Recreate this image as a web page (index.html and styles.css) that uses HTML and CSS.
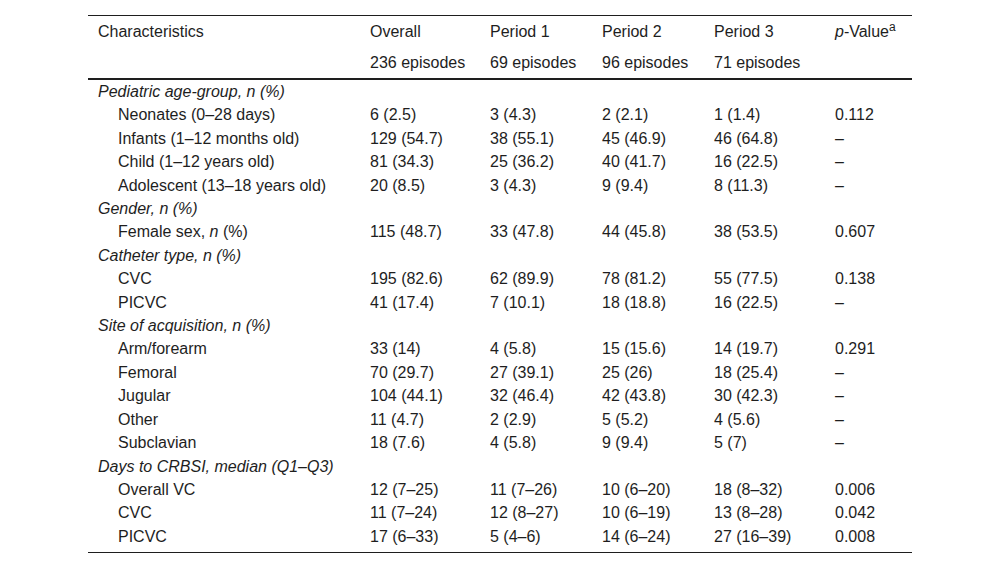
FILE: index.html
```html
<!DOCTYPE html>
<html lang="en">
<head>
<meta charset="utf-8">
<title>Table</title>
<link rel="stylesheet" href="styles.css">
</head>
<body>
<table class="tbl">
  <colgroup>
    <col class="c1"><col class="c2"><col class="c3"><col class="c4"><col class="c5"><col class="c6">
  </colgroup>
  <thead>
    <tr class="h1">
      <th>Characteristics</th><th>Overall</th><th>Period 1</th><th>Period 2</th><th>Period 3</th><th><i>p</i>-Value<sup>a</sup></th>
    </tr>
    <tr class="h2">
      <th></th><th>236 episodes</th><th>69 episodes</th><th>96 episodes</th><th>71 episodes</th><th></th>
    </tr>
  </thead>
  <tbody>
    <tr><td class="grp" colspan="6">Pediatric age-group, n (%)</td></tr>
    <tr><td class="sub">Neonates (0–28 days)</td><td>6 (2.5)</td><td>3 (4.3)</td><td>2 (2.1)</td><td>1 (1.4)</td><td>0.112</td></tr>
    <tr><td class="sub">Infants (1–12 months old)</td><td>129 (54.7)</td><td>38 (55.1)</td><td>45 (46.9)</td><td>46 (64.8)</td><td>–</td></tr>
    <tr><td class="sub">Child (1–12 years old)</td><td>81 (34.3)</td><td>25 (36.2)</td><td>40 (41.7)</td><td>16 (22.5)</td><td>–</td></tr>
    <tr><td class="sub">Adolescent (13–18 years old)</td><td>20 (8.5)</td><td>3 (4.3)</td><td>9 (9.4)</td><td>8 (11.3)</td><td>–</td></tr>
    <tr><td class="grp" colspan="6">Gender, n (%)</td></tr>
    <tr><td class="sub">Female sex, <i>n</i> (%)</td><td>115 (48.7)</td><td>33 (47.8)</td><td>44 (45.8)</td><td>38 (53.5)</td><td>0.607</td></tr>
    <tr><td class="grp" colspan="6">Catheter type, n (%)</td></tr>
    <tr><td class="sub">CVC</td><td>195 (82.6)</td><td>62 (89.9)</td><td>78 (81.2)</td><td>55 (77.5)</td><td>0.138</td></tr>
    <tr><td class="sub">PICVC</td><td>41 (17.4)</td><td>7 (10.1)</td><td>18 (18.8)</td><td>16 (22.5)</td><td>–</td></tr>
    <tr><td class="grp" colspan="6">Site of acquisition, n (%)</td></tr>
    <tr><td class="sub">Arm/forearm</td><td>33 (14)</td><td>4 (5.8)</td><td>15 (15.6)</td><td>14 (19.7)</td><td>0.291</td></tr>
    <tr><td class="sub">Femoral</td><td>70 (29.7)</td><td>27 (39.1)</td><td>25 (26)</td><td>18 (25.4)</td><td>–</td></tr>
    <tr><td class="sub">Jugular</td><td>104 (44.1)</td><td>32 (46.4)</td><td>42 (43.8)</td><td>30 (42.3)</td><td>–</td></tr>
    <tr><td class="sub">Other</td><td>11 (4.7)</td><td>2 (2.9)</td><td>5 (5.2)</td><td>4 (5.6)</td><td>–</td></tr>
    <tr><td class="sub">Subclavian</td><td>18 (7.6)</td><td>4 (5.8)</td><td>9 (9.4)</td><td>5 (7)</td><td>–</td></tr>
    <tr><td class="grp" colspan="6">Days to CRBSI, median (Q1–Q3)</td></tr>
    <tr><td class="sub">Overall VC</td><td>12 (7–25)</td><td>11 (7–26)</td><td>10 (6–20)</td><td>18 (8–32)</td><td>0.006</td></tr>
    <tr><td class="sub">CVC</td><td>11 (7–24)</td><td>12 (8–27)</td><td>10 (6–19)</td><td>13 (8–28)</td><td>0.042</td></tr>
    <tr class="last"><td class="sub">PICVC</td><td>17 (6–33)</td><td>5 (4–6)</td><td>14 (6–24)</td><td>27 (16–39)</td><td>0.008</td></tr>
  </tbody>
</table>
</body>
</html>
```

FILE: styles.css
```css
html, body {
  background: #ffffff;
}
body {
  margin: 8px;
  font-family: "Liberation Sans", Arial, sans-serif;
  font-size: 16px;
  color: #1e1e1e;
}
.tbl {
  margin: 7px 0 0 80px;
  width: 824px;
  table-layout: fixed;
  border-collapse: collapse;
  border-top: 1px solid #1e1e1e;
  border-bottom: 1px solid #1e1e1e;
}
.c1 { width: 272px; }
.c2 { width: 120px; }
.c3 { width: 112px; }
.c4 { width: 112px; }
.c5 { width: 121px; }
.c6 { width: 87px; }
.tbl th {
  font-weight: normal;
  text-align: left;
  padding: 0 10px;
  height: 31px;
  line-height: 31px;
  white-space: nowrap;
}
.tbl thead .h2 th {
  border-bottom: 2px solid #1e1e1e;
}
.tbl th sup {
  font-size: 12px;
  line-height: 0;
  vertical-align: 6px;
}
.tbl td {
  padding: 0 10px;
  height: 23.4px;
  line-height: 23.4px;
  white-space: nowrap;
  vertical-align: top;
}
.tbl tr.last td {
  padding-bottom: 4px;
}
.tbl td.grp {
  font-style: italic;
}
.tbl td.sub {
  padding-left: 30px;
}
```
